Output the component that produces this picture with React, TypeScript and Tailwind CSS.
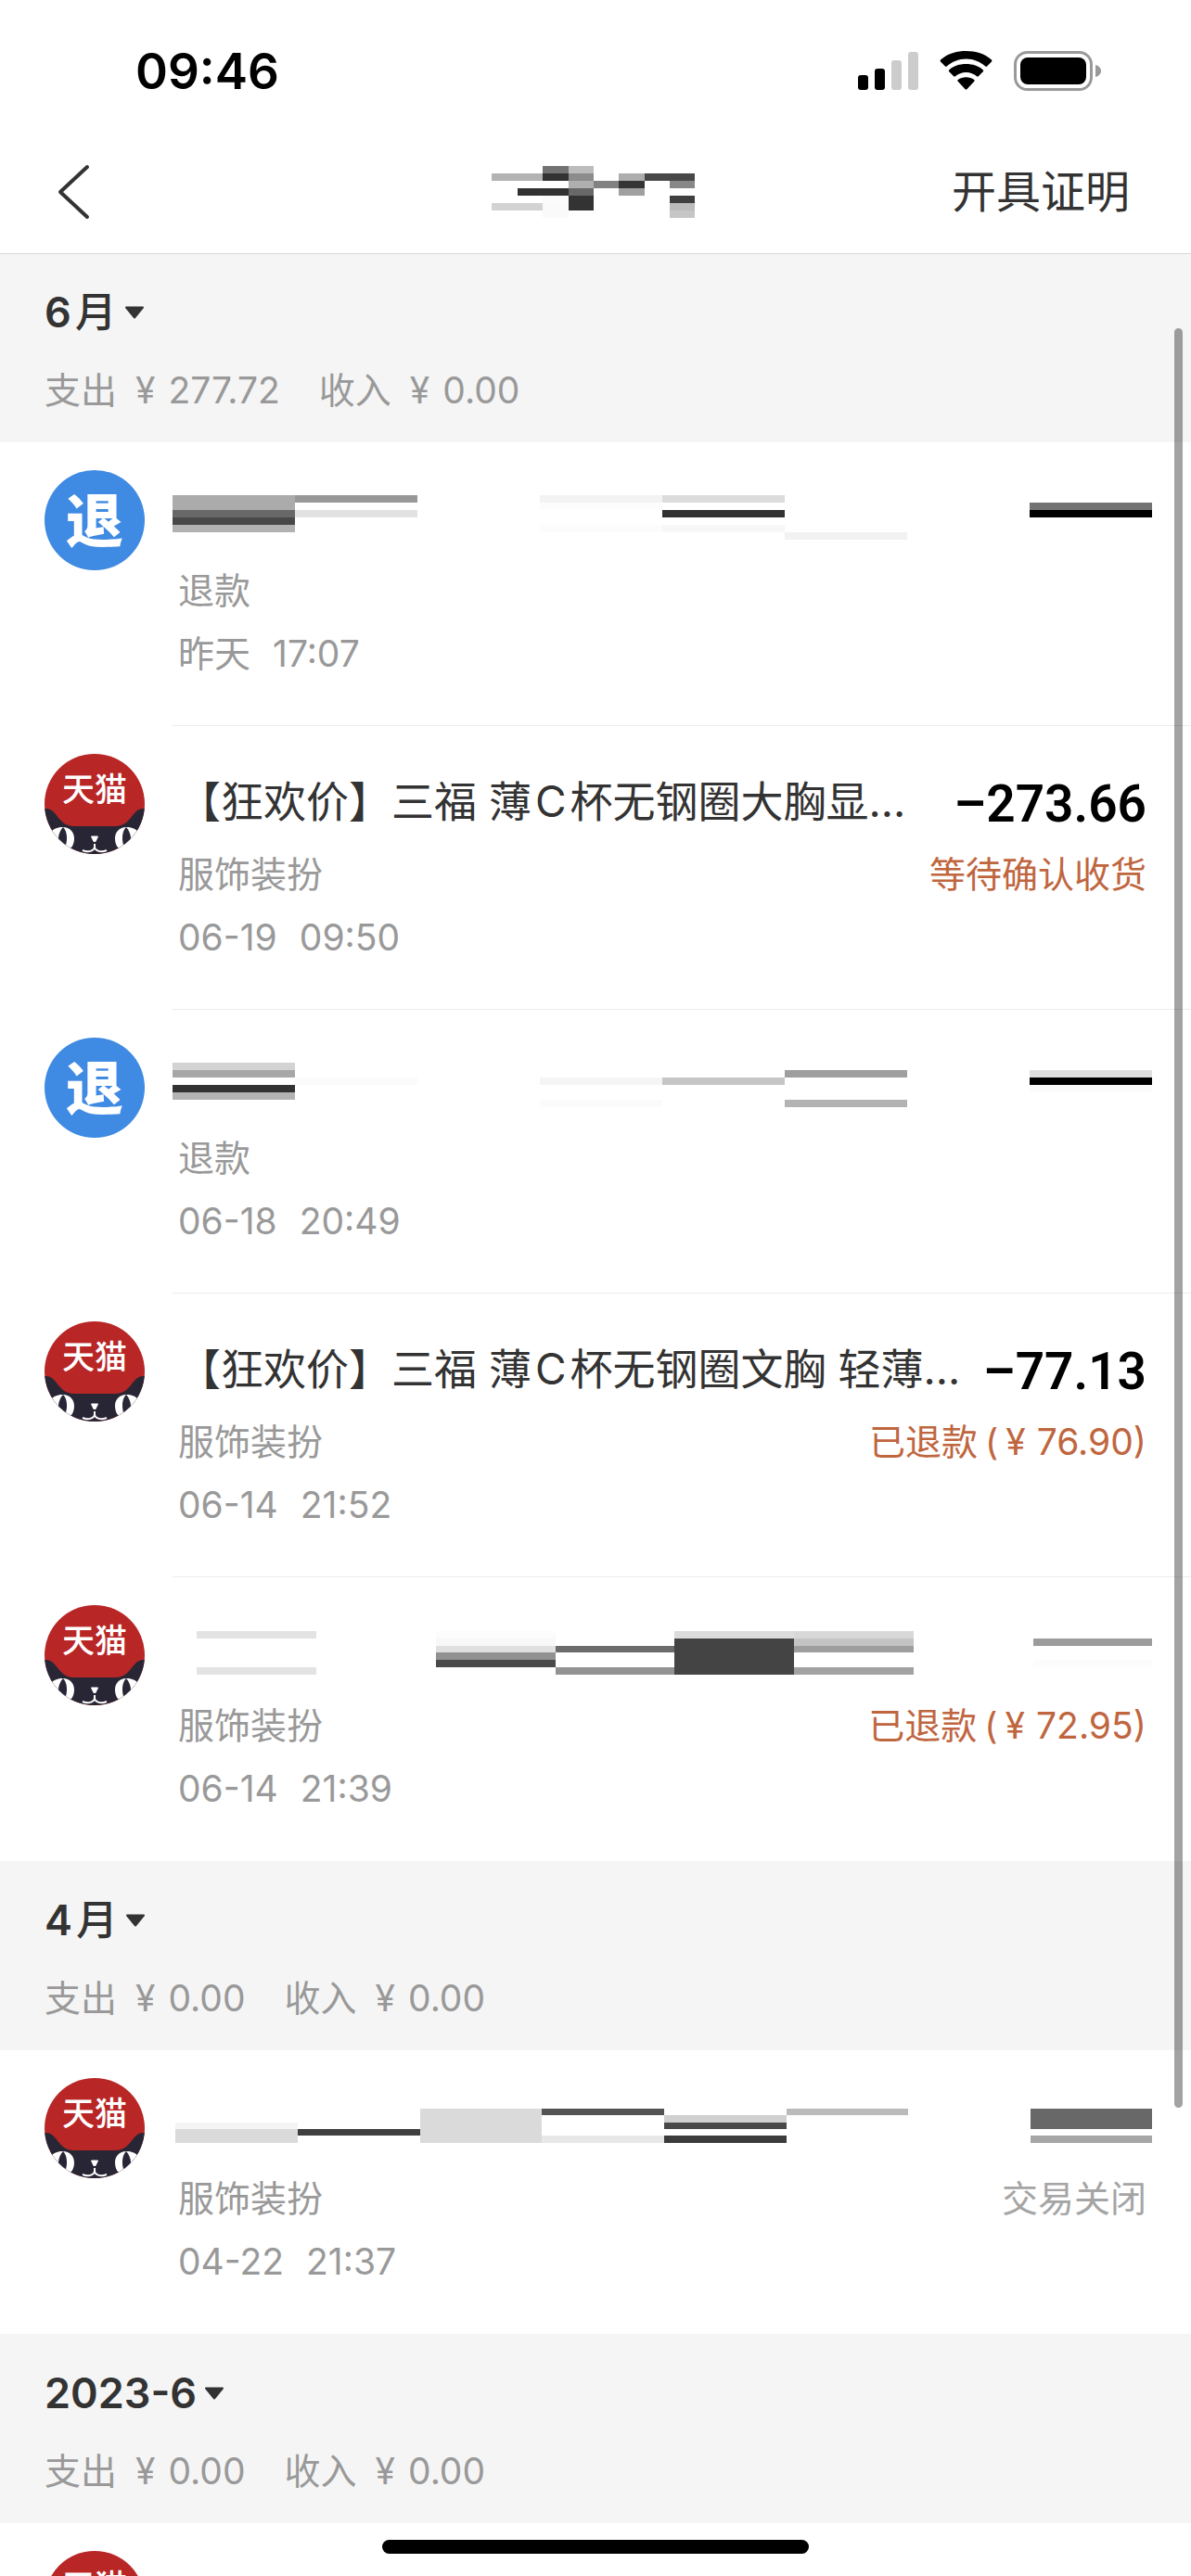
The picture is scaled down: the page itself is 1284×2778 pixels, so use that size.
type Cell = [x: number, y: number, w: number, h: number, shade: string];
type Blocks = { width: number; height: number; cells: Cell[] };

/* Pixelated blocks that hide private text. */
function Mosaic({ blocks, className = "" }: { blocks: Blocks; className?: string }) {
  return (
    <svg
      aria-hidden="true"
      className={`shrink-0 ${className}`}
      width={blocks.width}
      height={blocks.height}
      viewBox={`0 0 ${blocks.width} ${blocks.height}`}
      shapeRendering="crispEdges"
    >
      {blocks.cells.map(([x, y, w, h, shade]) => (
        <rect key={`${x}-${y}`} x={x} y={y} width={w} height={h} fill={shade} />
      ))}
    </svg>
  );
}

const nameBlocks: Blocks = {
  width: 219,
  height: 56,
  cells: [
    [55, 0, 28, 8, "#737373"], [83, 0, 27, 8, "#bcbcbc"],
    [0, 8, 55, 8, "#b3b3b3"], [55, 8, 28, 8, "#323232"], [83, 8, 27, 8, "#8c8c8c"], [137, 8, 28, 8, "#adadad"], [165, 8, 54, 8, "#484848"],
    [83, 16, 27, 8, "#afafaf"], [110, 16, 27, 8, "#828282"], [137, 16, 28, 8, "#353535"], [192, 16, 27, 8, "#888888"],
    [28, 24, 55, 8, "#323232"], [83, 24, 27, 8, "#686868"], [137, 24, 28, 8, "#a0a0a0"],
    [55, 32, 28, 8, "#fbfbfb"], [83, 32, 27, 16, "#333333"], [192, 32, 27, 8, "#3f3f3f"],
    [0, 40, 55, 8, "#d3d3d3"], [55, 40, 28, 16, "#fafafa"], [192, 40, 27, 8, "#bbbbbb"],
    [192, 48, 27, 8, "#c6c6c6"],
  ],
};

const refundA: { title: Blocks; amount: Blocks } = {
  title: {
    width: 792,
    height: 48,
    cells: [
      [0, 0, 132, 16, "#ababab"], [132, 0, 132, 8, "#989898"], [396, 0, 132, 8, "#f3f3f3"], [528, 0, 132, 8, "#dcdcdc"],
      [396, 8, 132, 8, "#fcfcfc"],
      [0, 16, 132, 8, "#686868"], [132, 16, 132, 8, "#e2e2e2"], [528, 16, 132, 8, "#323232"],
      [0, 24, 132, 8, "#484848"],
      [0, 32, 132, 8, "#b2b2b2"], [528, 32, 132, 8, "#f7f7f7"], [396, 32, 132, 8, "#fcfcfc"],
      [660, 40, 132, 8, "#f2f2f2"],
    ],
  },
  amount: { width: 132, height: 48, cells: [[0, 8, 132, 8, "#737373"], [0, 16, 132, 8, "#000000"]] },
};

const refundB: { title: Blocks; amount: Blocks } = {
  title: {
    width: 792,
    height: 48,
    cells: [
      [0, 0, 132, 8, "#d3d3d3"],
      [0, 8, 132, 8, "#a7a7a7"], [660, 8, 132, 8, "#9f9f9f"],
      [132, 16, 132, 8, "#fbfbfb"], [396, 16, 132, 8, "#f5f5f5"], [528, 16, 132, 8, "#c6c6c6"],
      [0, 24, 132, 8, "#323232"],
      [0, 32, 132, 8, "#b3b3b3"],
      [396, 40, 132, 8, "#fbfbfb"], [660, 40, 132, 8, "#b3b3b3"],
    ],
  },
  amount: { width: 132, height: 48, cells: [[0, 8, 132, 8, "#dfdfdf"], [0, 16, 132, 8, "#000000"], [0, 24, 132, 8, "#fbfbfb"]] },
};

const tmallA: { title: Blocks; amount: Blocks } = {
  title: {
    width: 799,
    height: 47,
    cells: [
      [26, 0, 129, 8, "#e3e3e3"], [26, 39, 129, 8, "#e3e3e3"],
      [284, 0, 129, 8, "#fcfcfc"], [284, 8, 129, 8, "#f8f8f8"], [284, 16, 129, 7, "#e0e0e0"], [284, 23, 129, 8, "#919191"], [284, 31, 129, 8, "#4a4a4a"],
      [413, 16, 128, 7, "#6c6c6c"], [413, 39, 128, 8, "#939393"],
      [541, 0, 129, 8, "#dcdcdc"], [541, 8, 129, 39, "#444444"],
      [670, 0, 129, 8, "#d8d8d8"], [670, 8, 129, 8, "#c4c4c4"], [670, 16, 129, 7, "#9e9e9e"], [670, 39, 129, 8, "#a2a2a2"],
    ],
  },
  amount: { width: 128, height: 47, cells: [[0, 8, 128, 8, "#9c9c9c"], [0, 31, 128, 8, "#fcfcfc"]] },
};

const tmallB: { title: Blocks; amount: Blocks } = {
  title: {
    width: 793,
    height: 37,
    cells: [
      [3, 15, 132, 7, "#f4f4f4"], [3, 22, 132, 15, "#dadada"],
      [135, 22, 132, 7, "#3f3f3f"],
      [267, 0, 131, 37, "#dadada"],
      [398, 0, 132, 7, "#535353"], [398, 29, 132, 8, "#e8e8e8"],
      [530, 7, 132, 8, "#d0d0d0"], [530, 15, 132, 7, "#484848"], [530, 29, 132, 8, "#3c3c3c"],
      [662, 0, 131, 7, "#bbbbbb"],
    ],
  },
  amount: { width: 131, height: 37, cells: [[0, 0, 131, 22, "#686868"], [0, 29, 131, 8, "#a6a6a6"]] },
};

function RefundAvatar() {
  return (
    <svg aria-hidden="true" className="size-27 shrink-0" viewBox="0 0 108 108">
      <circle cx="54" cy="54" r="54" fill="#3f8ae2" />
      <text x="54" y="78" textAnchor="middle" fontSize="62" fontWeight="900" fill="#fff">
        退
      </text>
    </svg>
  );
}

function TmallAvatar() {
  return (
    <svg aria-hidden="true" className="size-27 shrink-0" viewBox="0 0 108 108">
      <defs>
        <clipPath id="tmall-disc">
          <circle cx="54" cy="54" r="54" />
        </clipPath>
      </defs>
      <g clipPath="url(#tmall-disc)">
        <rect width="108" height="108" fill="#b82626" />
        <path
          d="M0 59C4 58.500 8 60 11 64C17 71 21 78 32 78H76C87 78 91 71 97 64C100 60 104 58.500 108 59V108H0Z"
          fill="#282635"
        />
        <path d="M7 84C12 79 17 79 20 79C27 79 32 84 32 91C32 98 29 103 24 103L8 104Z" fill="#fff" />
        <path d="M101 84C96 79 91 79 88 79C81 79 76 84 76 91C76 98 79 103 84 103L100 104Z" fill="#fff" />
        <path d="M20 79C25 84 25 94 22 101C18 97 15 94 15 91C15 87 17 82 20 79Z" fill="#282635" />
        <path d="M88 79C83 84 83 94 86 101C90 97 93 94 93 91C93 87 91 82 88 79Z" fill="#282635" />
        <path d="M50.500 89H57.500L55 94.500H53Z" fill="#fff" stroke="#fff" strokeLinejoin="round" />
        <path d="M54 97V100C54 104 48 107 41 104M54 100C54 104 60 107 67 104" fill="none" stroke="#fff" strokeWidth="2" />
      </g>
      <text x="54" y="51" textAnchor="middle" fontSize="35" fontWeight="500" fill="#fff">
        天猫
      </text>
    </svg>
  );
}

type Entry = {
  kind: "refund" | "tmall";
  title?: { before: string; latin: string; after: string };
  amount?: string;
  hidden?: { title: Blocks; amount: Blocks };
  category?: string;
  day?: string;
  time?: string;
  status?: string;
  refunded?: string;
  closed?: boolean;
};

function Row({ entry }: { entry: Entry }) {
  return (
    <li className="flex bg-white pl-12">
      <div className="pt-[30px]">{entry.kind === "refund" ? <RefundAvatar /> : <TmallAvatar />}</div>
      <div className="ml-[30px] flex min-w-0 flex-1 flex-col border-b border-[#ececec] pt-[51px] pr-12 pb-[47px] pl-1.5 text-[39px] leading-[60px] text-[#999]">
        <div className="flex h-[60px] items-center justify-between text-[#333]">
          {entry.hidden && (
            <>
              <Mosaic blocks={entry.hidden.title} className="-ml-1.5" />
              <Mosaic blocks={entry.hidden.amount} className="-mr-1.5" />
            </>
          )}
          {entry.title && (
            <p className="truncate text-[46px]">
              {entry.title.before}
              <span className="mx-1">{entry.title.latin}</span>
              {entry.title.after}
            </p>
          )}
          {entry.amount && (
            <p className="shrink-0 pt-1.5 font-[Roboto,sans-serif] text-[55px] font-semibold text-black">
              {entry.amount}
            </p>
          )}
        </div>
        <div className="mt-[19px] flex justify-between">
          <p>{entry.category}</p>
          {entry.status && (
            <p className={entry.closed ? "text-[#a5a5a5]" : "text-[#bf663f]"}>
              {entry.status}
              {entry.refunded && (
                <>
                  <span className="ml-2">(</span>
                  <span className="mr-3 ml-2">¥</span>
                  {entry.refunded})
                </>
              )}
            </p>
          )}
        </div>
        <p className="mt-2 flex gap-6">
          <span>{entry.day}</span>
          <span>{entry.time}</span>
        </p>
      </div>
    </li>
  );
}

function Total({ label, value }: { label: string; value: string }) {
  return (
    <p className="flex">
      <span>{label}</span>
      <span className="ml-5">¥</span>
      <span className="ml-[14px]">{value}</span>
    </p>
  );
}

type Month = { name: string; cjk?: boolean; spent: string; income: string; entries: Entry[] };

function MonthGroup({ month }: { month: Month }) {
  return (
    <section>
      <header className="bg-[#f5f5f5] px-12 pt-[34px] pb-[26px] leading-[60px]">
        <h2>
          <button type="button" className="flex items-center text-[45px] font-semibold text-[#333]">
            {month.name}
            {month.cjk && <span className="ml-1 font-medium">月</span>}
            <svg aria-hidden="true" className="ml-2" width="22" height="14" viewBox="0 0 22 14">
              <path d="M2 1.500H20L11 12.500Z" fill="#333" stroke="#333" strokeWidth="2" strokeLinejoin="round" />
            </svg>
          </button>
        </h2>
        <div className="mt-6 flex gap-[42px] text-[39px] text-[#999]">
          <Total label="支出" value={month.spent} />
          <Total label="收入" value={month.income} />
        </div>
      </header>
      <ul className="[&>li:last-child>div]:border-white">
        {month.entries.map((entry, index) => (
          <Row key={index} entry={entry} />
        ))}
      </ul>
    </section>
  );
}

const months: Month[] = [
  {
    name: "6",
    cjk: true,
    spent: "277.72",
    income: "0.00",
    entries: [
      { kind: "refund", hidden: refundA, category: "退款", day: "昨天", time: "17:07" },
      {
        kind: "tmall",
        title: { before: "【狂欢价】三福 薄", latin: "C", after: "杯无钢圈大胸显…" },
        amount: "–273.66",
        category: "服饰装扮",
        status: "等待确认收货",
        day: "06-19",
        time: "09:50",
      },
      { kind: "refund", hidden: refundB, category: "退款", day: "06-18", time: "20:49" },
      {
        kind: "tmall",
        title: { before: "【狂欢价】三福 薄", latin: "C", after: "杯无钢圈文胸 轻薄…" },
        amount: "–77.13",
        category: "服饰装扮",
        status: "已退款",
        refunded: "76.90",
        day: "06-14",
        time: "21:52",
      },
      { kind: "tmall", hidden: tmallA, category: "服饰装扮", status: "已退款", refunded: "72.95", day: "06-14", time: "21:39" },
    ],
  },
  {
    name: "4",
    cjk: true,
    spent: "0.00",
    income: "0.00",
    entries: [
      { kind: "tmall", hidden: tmallB, category: "服饰装扮", status: "交易关闭", closed: true, day: "04-22", time: "21:37" },
    ],
  },
  {
    name: "2023-6",
    spent: "0.00",
    income: "0.00",
    entries: [{ kind: "tmall" }],
  },
];

function StatusBar() {
  return (
    <div className="flex items-center justify-between pt-[47px] pr-24 pb-[34px] pl-[146px] leading-[60px]">
      <time className="text-[53px] font-semibold text-black">09:46</time>
      <svg aria-hidden="true" width="264" height="44" viewBox="0 0 264 44">
        <rect x="1" y="26" width="11" height="16" rx="3" />
        <rect x="19" y="19" width="11" height="23" rx="3" />
        <rect x="37" y="10" width="11" height="32" rx="3" fill="#ccc" />
        <rect x="55" y="1" width="11" height="41" rx="3" fill="#ccc" />
        <path d="M117.500 8.500C125.500 8.500 132.800 11.500 138.300 16.500C138.800 17 139.500 17 140 16.500L145 11.400C145.500 10.900 145.500 10.100 145 9.600C137.800 2.900 128 0 117.500 0S97.200 2.900 90 9.600C89.500 10.100 89.500 10.900 90 11.400L95 16.500C95.500 17 96.200 17 96.700 16.500C102.200 11.500 109.500 8.500 117.500 8.500Z" />
        <path d="M117.500 23C122 23 126 24.600 129.100 27.300C129.600 27.800 130.300 27.800 130.800 27.300L135.800 22.200C136.300 21.700 136.300 20.900 135.800 20.400C131 16 124.500 14 117.500 14S104 16 99.200 20.400C98.700 20.900 98.700 21.700 99.200 22.200L104.200 27.300C104.700 27.800 105.400 27.800 105.900 27.300C109 24.600 113 23 117.500 23Z" />
        <path d="M126.300 32.800C126.800 32.300 126.800 31.500 126.200 31.100C121.300 27.300 113.700 27.300 108.800 31.100C108.200 31.500 108.200 32.300 108.700 32.800L116.600 41.200C117.100 41.700 117.900 41.700 118.400 41.200Z" />
        <rect x="170.500" y="1.500" width="82" height="40" rx="13" fill="none" stroke="#999" strokeWidth="3" />
        <rect x="176" y="7" width="71" height="29" rx="8" />
        <path d="M257 15C261 16 263 19 263 21.500S261 27 257 28Z" fill="#999" />
      </svg>
    </div>
  );
}

export default function App() {
  return (
    <div
      lang="zh-CN"
      className="relative flex h-screen flex-col overflow-hidden bg-white font-[Inter,'Noto_Sans_CJK_SC',sans-serif]"
    >
      <div className="relative shrink-0 bg-white shadow-[0_1px_0_#d9d9d9]">
        <StatusBar />
        <nav className="grid grid-cols-[1fr_auto_1fr] items-center py-9 pr-[66px] pl-[60px] leading-[60px]">
          <button type="button" aria-label="返回" className="flex">
            <svg width="40" height="60" viewBox="0 0 40 60" fill="none" stroke="#333" strokeWidth="4">
              <path d="M34 3L5 30L34 57" strokeLinejoin="round" strokeLinecap="round" />
            </svg>
          </button>
          <Mosaic blocks={nameBlocks} />
          <button type="button" className="justify-self-end text-[48px] text-[#333]">
            开具证明
          </button>
        </nav>
      </div>

      <main className="min-h-0 flex-1 overflow-hidden">
        {months.map((month) => (
          <MonthGroup key={month.name} month={month} />
        ))}
      </main>

      <div className="absolute top-[354px] right-[9px] bottom-[505px] w-[9px] rounded-full bg-black/36" />
      <div className="absolute bottom-6 left-1/2 h-[15px] w-[460px] -translate-x-1/2 rounded-full bg-black" />
    </div>
  );
}
